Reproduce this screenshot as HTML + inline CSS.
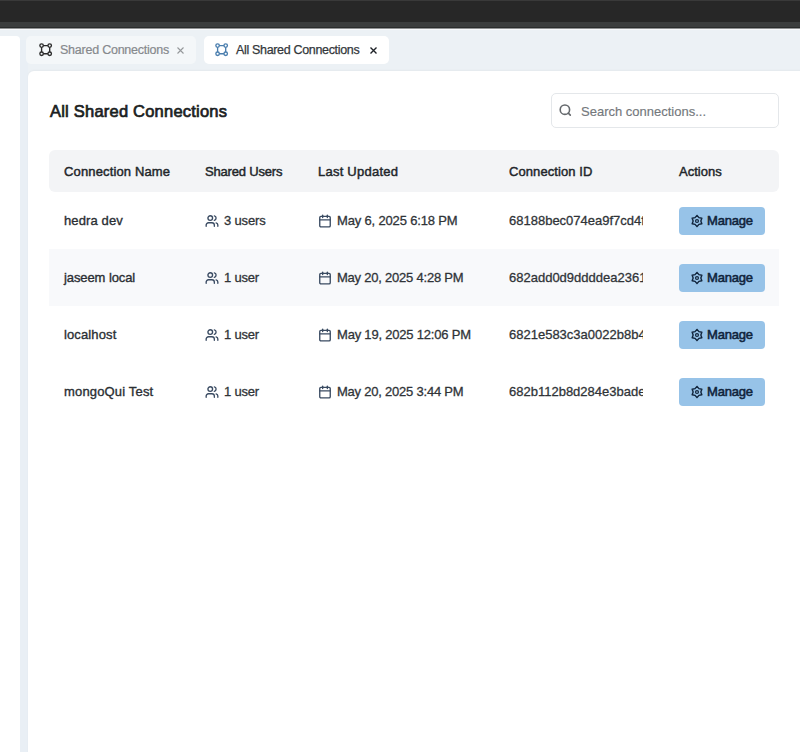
<!DOCTYPE html>
<html><head><meta charset="utf-8">
<style>
*{box-sizing:border-box;margin:0;padding:0}
html,body{width:800px;height:752px;overflow:hidden;background:#ecf1f5;font-family:"Liberation Sans",sans-serif;color:#1f2328}
.tx{position:absolute;white-space:nowrap}
.topbar{position:absolute;left:0;top:0;width:800px;height:28px;background:#272727}
.topbar .s0{position:absolute;left:0;top:0;width:800px;height:1px;background:#393939}
.topbar .strip{position:absolute;left:0;top:22px;width:800px;height:5px;background:#3b3d3d}
.topbar .line{position:absolute;left:0;top:27px;width:800px;height:1px;background:#2a2c2c}
.hm{position:absolute;left:0;top:28px;width:800px;height:1px;background:#909293}
.hl{position:absolute;left:0;top:29px;width:800px;height:1px;background:#f7f9fb}
.leftpanel{position:absolute;left:0;top:36px;width:20px;height:716px;background:#fff;border-top-right-radius:4px}
.tab{position:absolute;top:36px;height:28px;border-radius:5px}
.tab1{left:26px;width:170px;background:#f4f7f9}
.tab2{left:204px;width:185px;background:#fff}
.tab svg{display:block}
.tabt1{font-size:12.5px;color:#86898d;-webkit-text-stroke:0.2px #86898d}
.tabt2{font-size:12.5px;color:#33373b;-webkit-text-stroke:0.25px #33373b}
.card{position:absolute;left:28px;top:71px;width:780px;height:700px;background:#fff;border-top-left-radius:6px;box-shadow:0 -1px 2px rgba(0,0,0,0.035)}
.title{font-size:16.5px;color:#1b1e22;-webkit-text-stroke:0.7px #1b1e22}
.search{position:absolute;left:551px;top:93px;width:228px;height:35px;border:1px solid #e4e7ea;border-radius:5px;background:#fff}
.search svg{position:absolute;left:6.3px;top:9.3px}
.ph{font-size:13px;color:#74787c;-webkit-text-stroke:0.15px #74787c}
.thead{position:absolute;left:49px;top:150px;width:730px;height:42px;background:#f3f4f6;border-radius:6px}
.th{font-size:13px;color:#22262a;-webkit-text-stroke:0.45px #22262a}
.row{position:absolute;left:49px;width:730px;height:57px}
.row.alt{background:#f8f9fb}
.cell{font-size:13px;color:#303438;-webkit-text-stroke:0.3px #303438}
.name{font-size:13px;color:#2b2f34;-webkit-text-stroke:0.36px #2b2f34}
.ic{position:absolute;width:14px;height:14px}
.ic svg{display:block}
.btn{position:absolute;left:679px;width:86px;height:28px;background:#97c3e8;border-radius:4px}
.btn svg{position:absolute;left:10.8px;top:7px}
.bt{font-size:13px;color:#10243c;-webkit-text-stroke:0.55px #10243c}
.idc{overflow:hidden;width:134px}
</style></head><body>
<div class="topbar"><div class="s0"></div><div class="strip"></div><div class="line"></div></div>
<div class="hm"></div><div class="hl"></div>
<div class="leftpanel"></div>
<div style="position:absolute;left:20px;top:40px;width:8px;height:712px;background:#e9eff5"></div>
<div class="tab tab1"><span style="position:absolute;left:13px;top:7px"><svg width="14" height="14" viewBox="0 0 14 14" fill="none" stroke="#2a2a2a" stroke-width="1.35"><circle cx="2.6" cy="2.6" r="1.75"/><circle cx="10.7" cy="2.6" r="1.75"/><circle cx="2.6" cy="10.7" r="1.75"/><circle cx="10.7" cy="10.7" r="1.75"/><path d="M4.35 2.6H8.95M4.35 10.7H8.95M2.6 4.35V8.95M10.7 4.35V8.95"/></svg></span><svg style="position:absolute;left:151px;top:11px" width="7" height="7" viewBox="0 0 7 7" stroke="#95989b" stroke-width="1.1"><path d="M0.5 0.5L6.5 6.5M6.5 0.5L0.5 6.5"/></svg></div>
<div id="tab1t" class="tx tabt1" style="left:60px;top:43px;letter-spacing:-0.235px">Shared Connections</div>
<div class="tab tab2"><span style="position:absolute;left:11px;top:7px"><svg width="14" height="14" viewBox="0 0 14 14" fill="none" stroke="#4a7eae" stroke-width="1.35"><circle cx="2.6" cy="2.6" r="1.75"/><circle cx="10.7" cy="2.6" r="1.75"/><circle cx="2.6" cy="10.7" r="1.75"/><circle cx="10.7" cy="10.7" r="1.75"/><path d="M4.35 2.6H8.95M4.35 10.7H8.95M2.6 4.35V8.95M10.7 4.35V8.95"/></svg></span><svg style="position:absolute;left:166px;top:11px" width="7" height="7" viewBox="0 0 7 7" stroke="#1f2328" stroke-width="1.4"><path d="M0.5 0.5L6.5 6.5M6.5 0.5L0.5 6.5"/></svg></div>
<div id="tab2t" class="tx tabt2" style="left:236px;top:43px;letter-spacing:-0.333px">All Shared Connections</div>
<div class="card"></div>
<div id="title" class="tx title" style="left:50px;top:102px;letter-spacing:0.215px">All Shared Connections</div>
<div class="search"><svg width="14" height="14" viewBox="0 0 14 14" fill="none" stroke="#65696d" stroke-width="1.6" stroke-linecap="round"><circle cx="6.9" cy="6.7" r="4.7"/><path d="M10.3 10.1L12.3 12.1"/></svg></div>
<div id="ph" class="tx ph" style="left:581px;top:104px;letter-spacing:0.000px">Search connections...</div>
<div class="thead"></div>
<div id="th0" class="tx th" style="left:64px;top:164px;letter-spacing:0.143px">Connection Name</div>
<div id="th1" class="tx th" style="left:205px;top:164px;letter-spacing:-0.182px">Shared Users</div>
<div id="th2" class="tx th" style="left:318px;top:164px;letter-spacing:0.238px">Last Updated</div>
<div id="th3" class="tx th" style="left:509px;top:164px;letter-spacing:0.083px">Connection ID</div>
<div id="th4" class="tx th" style="left:679px;top:164px;letter-spacing:0.000px">Actions</div>
<div class="row" style="top:192px"></div>
<div class="row alt" style="top:249px"></div>
<div class="row" style="top:306px"></div>
<div class="row" style="top:363px"></div>
<div id="n0" class="tx name" style="left:64px;top:213px;letter-spacing:0.125px">hedra dev</div>
<div class="ic" style="left:205px;top:214px"><svg width="14" height="14" viewBox="0 0 24 24" fill="none" stroke="#3a4b62" stroke-width="2.3" stroke-linecap="round" stroke-linejoin="round"><path d="M16 21v-2a4 4 0 0 0-4-4H6a4 4 0 0 0-4 4v2"/><circle cx="9" cy="7" r="4"/><path d="M22 21v-2a4 4 0 0 0-3-3.870"/><path d="M16 3.13a4 4 0 0 1 0 7.75"/></svg></div>
<div id="u0" class="tx cell" style="left:224px;top:213px;letter-spacing:-0.167px">3 users</div>
<div class="ic" style="left:318px;top:214px"><svg width="14" height="14" viewBox="0 0 24 24" fill="none" stroke="#3a4b62" stroke-width="2.3" stroke-linecap="round" stroke-linejoin="round"><path d="M8 2v4"/><path d="M16 2v4"/><rect width="18" height="18" x="3" y="4" rx="2"/><path d="M3 10h18"/></svg></div>
<div id="d0" class="tx cell" style="left:337px;top:213px;letter-spacing:-0.167px">May 6, 2025 6:18 PM</div>
<div class="tx cell idc" style="left:509px;top:213px">68188bec074ea9f7cd4f1a2b</div>
<div class="btn" style="top:207px"><svg width="14" height="14" viewBox="0 0 14 14" fill="none" stroke="#10243c" stroke-width="1.4" stroke-linejoin="round"><path d="M7.00 1.40 L8.93 3.67 L11.85 4.20 L10.85 7.00 L11.85 9.80 L8.93 10.33 L7.00 12.60 L5.08 10.33 L2.15 9.80 L3.15 7.00 L2.15 4.20 L5.07 3.67Z"/><circle cx="7" cy="7" r="1.45" stroke-width="1.2"/></svg></div>
<div id="m0" class="tx bt" style="left:707px;top:213px;letter-spacing:-0.200px">Manage</div>
<div id="n1" class="tx name" style="left:64px;top:270px;letter-spacing:-0.091px">jaseem local</div>
<div class="ic" style="left:205px;top:271px"><svg width="14" height="14" viewBox="0 0 24 24" fill="none" stroke="#3a4b62" stroke-width="2.3" stroke-linecap="round" stroke-linejoin="round"><path d="M16 21v-2a4 4 0 0 0-4-4H6a4 4 0 0 0-4 4v2"/><circle cx="9" cy="7" r="4"/><path d="M22 21v-2a4 4 0 0 0-3-3.870"/><path d="M16 3.13a4 4 0 0 1 0 7.75"/></svg></div>
<div id="u1" class="tx cell" style="left:224px;top:270px;letter-spacing:-0.200px">1 user</div>
<div class="ic" style="left:318px;top:271px"><svg width="14" height="14" viewBox="0 0 24 24" fill="none" stroke="#3a4b62" stroke-width="2.3" stroke-linecap="round" stroke-linejoin="round"><path d="M8 2v4"/><path d="M16 2v4"/><rect width="18" height="18" x="3" y="4" rx="2"/><path d="M3 10h18"/></svg></div>
<div id="d1" class="tx cell" style="left:337px;top:270px;letter-spacing:-0.220px">May 20, 2025 4:28 PM</div>
<div class="tx cell idc" style="left:509px;top:270px">682add0d9ddddea2361c4e7f</div>
<div class="btn" style="top:264px"><svg width="14" height="14" viewBox="0 0 14 14" fill="none" stroke="#10243c" stroke-width="1.4" stroke-linejoin="round"><path d="M7.00 1.40 L8.93 3.67 L11.85 4.20 L10.85 7.00 L11.85 9.80 L8.93 10.33 L7.00 12.60 L5.08 10.33 L2.15 9.80 L3.15 7.00 L2.15 4.20 L5.07 3.67Z"/><circle cx="7" cy="7" r="1.45" stroke-width="1.2"/></svg></div>
<div id="m1" class="tx bt" style="left:707px;top:270px;letter-spacing:-0.200px">Manage</div>
<div id="n2" class="tx name" style="left:64px;top:327px;letter-spacing:0.125px">localhost</div>
<div class="ic" style="left:205px;top:328px"><svg width="14" height="14" viewBox="0 0 24 24" fill="none" stroke="#3a4b62" stroke-width="2.3" stroke-linecap="round" stroke-linejoin="round"><path d="M16 21v-2a4 4 0 0 0-4-4H6a4 4 0 0 0-4 4v2"/><circle cx="9" cy="7" r="4"/><path d="M22 21v-2a4 4 0 0 0-3-3.870"/><path d="M16 3.13a4 4 0 0 1 0 7.75"/></svg></div>
<div id="u2" class="tx cell" style="left:224px;top:327px;letter-spacing:-0.200px">1 user</div>
<div class="ic" style="left:318px;top:328px"><svg width="14" height="14" viewBox="0 0 24 24" fill="none" stroke="#3a4b62" stroke-width="2.3" stroke-linecap="round" stroke-linejoin="round"><path d="M8 2v4"/><path d="M16 2v4"/><rect width="18" height="18" x="3" y="4" rx="2"/><path d="M3 10h18"/></svg></div>
<div id="d2" class="tx cell" style="left:337px;top:327px;letter-spacing:-0.200px">May 19, 2025 12:06 PM</div>
<div class="tx cell idc" style="left:509px;top:327px">6821e583c3a0022b8b4d9e10</div>
<div class="btn" style="top:321px"><svg width="14" height="14" viewBox="0 0 14 14" fill="none" stroke="#10243c" stroke-width="1.4" stroke-linejoin="round"><path d="M7.00 1.40 L8.93 3.67 L11.85 4.20 L10.85 7.00 L11.85 9.80 L8.93 10.33 L7.00 12.60 L5.08 10.33 L2.15 9.80 L3.15 7.00 L2.15 4.20 L5.07 3.67Z"/><circle cx="7" cy="7" r="1.45" stroke-width="1.2"/></svg></div>
<div id="m2" class="tx bt" style="left:707px;top:327px;letter-spacing:-0.200px">Manage</div>
<div id="n3" class="tx name" style="left:64px;top:384px;letter-spacing:0.167px">mongoQui Test</div>
<div class="ic" style="left:205px;top:385px"><svg width="14" height="14" viewBox="0 0 24 24" fill="none" stroke="#3a4b62" stroke-width="2.3" stroke-linecap="round" stroke-linejoin="round"><path d="M16 21v-2a4 4 0 0 0-4-4H6a4 4 0 0 0-4 4v2"/><circle cx="9" cy="7" r="4"/><path d="M22 21v-2a4 4 0 0 0-3-3.870"/><path d="M16 3.13a4 4 0 0 1 0 7.75"/></svg></div>
<div id="u3" class="tx cell" style="left:224px;top:384px;letter-spacing:-0.200px">1 user</div>
<div class="ic" style="left:318px;top:385px"><svg width="14" height="14" viewBox="0 0 24 24" fill="none" stroke="#3a4b62" stroke-width="2.3" stroke-linecap="round" stroke-linejoin="round"><path d="M8 2v4"/><path d="M16 2v4"/><rect width="18" height="18" x="3" y="4" rx="2"/><path d="M3 10h18"/></svg></div>
<div id="d3" class="tx cell" style="left:337px;top:384px;letter-spacing:-0.220px">May 20, 2025 3:44 PM</div>
<div class="tx cell idc" style="left:509px;top:384px">682b112b8d284e3bade5c3a1</div>
<div class="btn" style="top:378px"><svg width="14" height="14" viewBox="0 0 14 14" fill="none" stroke="#10243c" stroke-width="1.4" stroke-linejoin="round"><path d="M7.00 1.40 L8.93 3.67 L11.85 4.20 L10.85 7.00 L11.85 9.80 L8.93 10.33 L7.00 12.60 L5.08 10.33 L2.15 9.80 L3.15 7.00 L2.15 4.20 L5.07 3.67Z"/><circle cx="7" cy="7" r="1.45" stroke-width="1.2"/></svg></div>
<div id="m3" class="tx bt" style="left:707px;top:384px;letter-spacing:-0.200px">Manage</div>
</body></html>
